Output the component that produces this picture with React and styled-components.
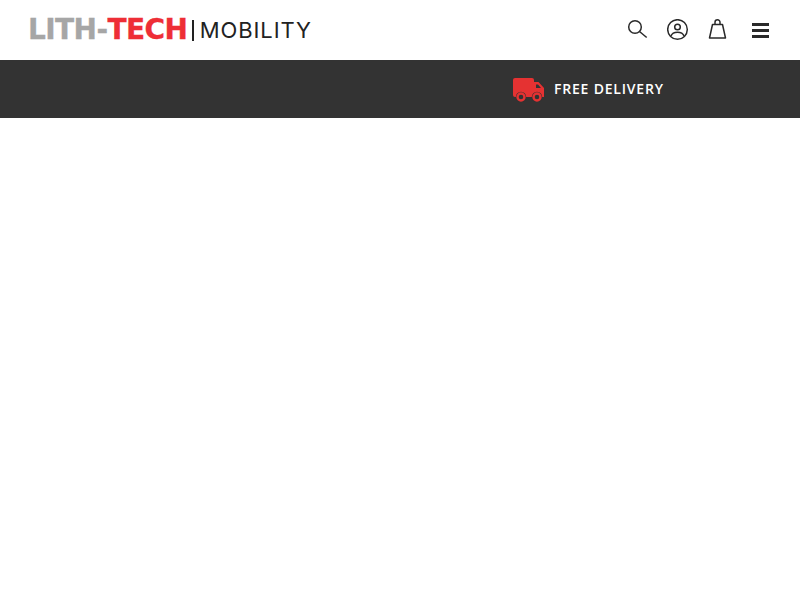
import { createGlobalStyle, styled } from "styled-components";

const GlobalStyle = createGlobalStyle`
  html, body { margin: 0; padding: 0; background: #fff; }
  body { font-family: "Open Sans", "Liberation Sans", sans-serif; }
`

const Header = styled.header`
  height: 60px;
  padding: 0 28px;
  display: flex;
  align-items: center;
  justify-content: space-between;
  background: #fff;
`
const Logo = styled.a`
  display: flex;
  align-items: center;
  height: 24px;
  white-space: nowrap;
`
const Brand = styled.span`
  font-family: "DejaVu Sans", "Liberation Sans", sans-serif;
  font-size: 28px;
  font-weight: 700;
  letter-spacing: -0.6px;
  line-height: 24px;
  color: ${(p) => p.$color};
  -webkit-text-stroke: 0.3px ${(p) => p.$color};
`
const Divider = styled.span`
  width: 1.5px;
  height: 21px;
  margin: 0 6px 0 5px;
  background: #222;
`
const Sub = styled.span`
  font-family: "Inter", sans-serif;
  font-size: 22px;
  font-weight: 400;
  letter-spacing: 0.9px;
  line-height: 24px;
  color: #222;
`
const Icons = styled.nav`
  display: flex;
  align-items: center;
  gap: 18px;
`
const IconBtn = styled.button`
  width: 22px;
  height: 22px;
  padding: 0;
  border: 0;
  background: none;
  color: #2a2a2a;
  svg { display: block; }
`
const MenuBtn = styled(IconBtn)`
  margin-left: 3px;
`
const Strip = styled.section`
  height: 58px;
  padding-left: 513px;
  display: flex;
  align-items: center;
  background: #333;
`
const Delivery = styled.div`
  display: flex;
  align-items: center;
  gap: 9px;
`
const DeliveryText = styled.span`
  font-size: 14px;
  font-weight: 600;
  letter-spacing: 0.8px;
  line-height: 18px;
  color: #fff;
`

const App = () => {
  return (
    <>
      <GlobalStyle />
      <Header>
        <Logo>
          <Brand $color="#a6a6a6">LITH-</Brand>
          <Brand $color="#ee2e36">TECH</Brand>
          <Divider />
          <Sub>MOBILITY</Sub>
        </Logo>
        <Icons>
          <IconBtn aria-label="Search">
            <svg width="22" height="22" viewBox="0 0 22 22" fill="none" stroke="currentColor" strokeWidth="1.5">
              <circle cx="8" cy="8" r="6.3" />
              <path d="M12.5 12.5 19.700 18.500" />
            </svg>
          </IconBtn>
          <IconBtn aria-label="Account">
            <svg width="22" height="22" viewBox="0 0 22 22" fill="none" stroke="currentColor" strokeWidth="1.5">
              <circle cx="10.500" cy="10.500" r="9.800" />
              <circle cx="10.500" cy="8" r="2.800" />
              <path d="M4 17c1-2.800 3.500-3.800 6.500-3.800s5.500 1 6.500 3.800" />
            </svg>
          </IconBtn>
          <IconBtn aria-label="Bag">
            <svg width="22" height="22" viewBox="0 0 22 22" fill="none" stroke="currentColor" strokeWidth="1.5">
              <path d="M5.500 5.500h10l3 13.500h-16z" strokeLinejoin="round" />
              <path d="M8 5.500V3.300a2.500 2.500 0 0 1 5 0v2.200" />
            </svg>
          </IconBtn>
          <MenuBtn aria-label="Menu">
            <svg width="22" height="22" viewBox="0 0 22 22" fill="currentColor">
              <rect x="2" y="4" width="17" height="3" />
              <rect x="2" y="10" width="17" height="3" />
              <rect x="2" y="16" width="17" height="3" />
            </svg>
          </MenuBtn>
        </Icons>
      </Header>
      <Strip>
        <Delivery>
          <svg width="32" height="26" viewBox="0 0 32 26" fill="#e53232">
            <path d="M2 2h17a2 2 0 0 1 2 2v17H2a2 2 0 0 1-2-2V4a2 2 0 0 1 2-2z" />
            <path d="M21 6h4.500l5.500 6v9H21zM23 8.500v3.500h5l-3-3.500z" fillRule="evenodd" />
            <circle cx="8" cy="21" r="5.200" fill="#333" />
            <circle cx="8" cy="21" r="3.500" fill="none" stroke="#e53232" strokeWidth="2.400" />
            <circle cx="24" cy="21" r="5.200" fill="#333" />
            <circle cx="24" cy="21" r="3.500" fill="none" stroke="#e53232" strokeWidth="2.400" />
          </svg>
          <DeliveryText>FREE DELIVERY</DeliveryText>
        </Delivery>
      </Strip>
    </>
  )
}

export default App
